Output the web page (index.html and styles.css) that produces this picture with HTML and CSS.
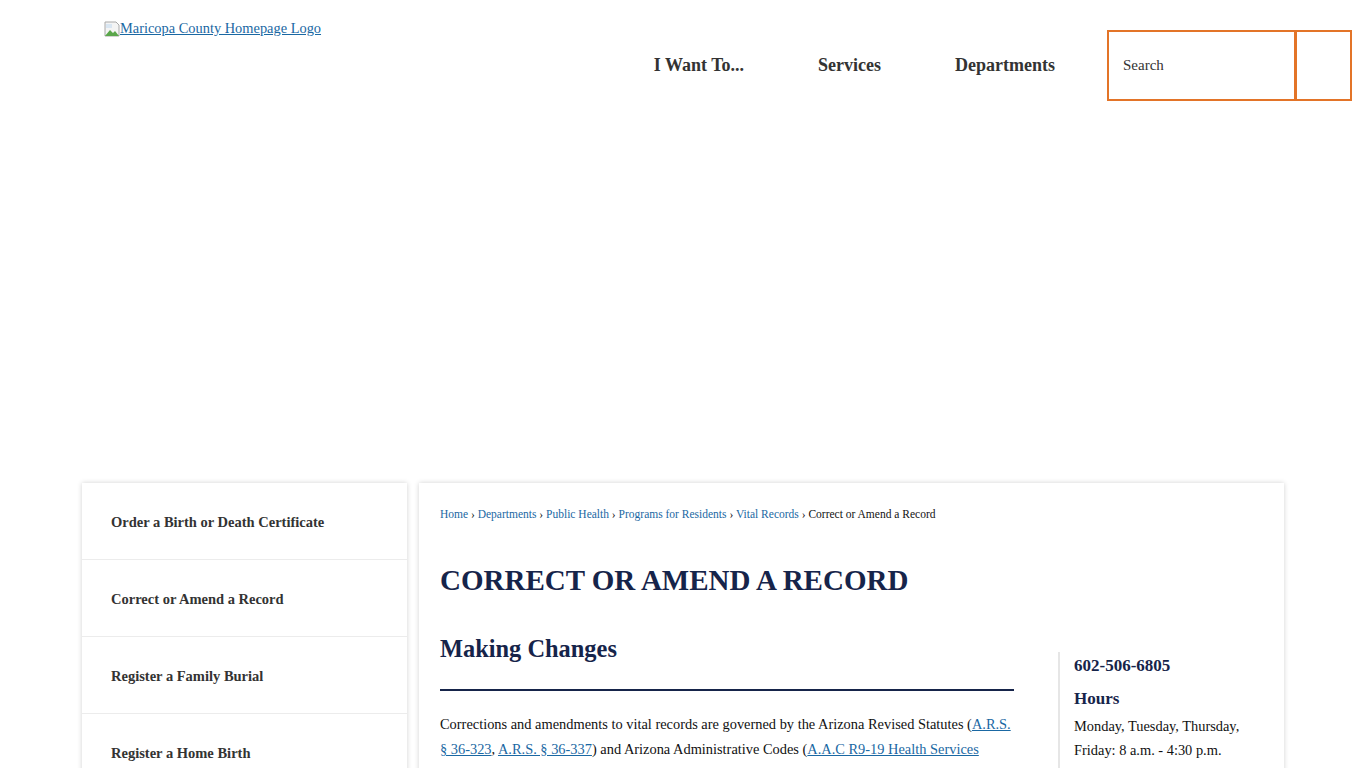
FILE: index.html
```html
<!DOCTYPE html>
<html lang="en">
<head>
  <meta charset="UTF-8">
  <meta name="viewport" content="width=device-width, initial-scale=1.0">
  <title>Correct or Amend a Record | Maricopa County, AZ</title>
  <link rel="stylesheet" href="styles.css">
</head>
<body>
  <header class="site-header">
    <a class="logo" href="#">
      <svg class="broken-img" width="16" height="16" viewBox="0 0 16 16" aria-hidden="true">
        <path d="M1 1h11l3 3v11H1z" fill="#f4f4f4" stroke="#a8a8a8"/>
        <path d="M1 15l5-6 3 3 2-2 4 5z" fill="#5aa64a"/>
        <path d="M2 3h6v4H2z" fill="#d9e6f2"/>
      </svg><span>Maricopa County Homepage Logo</span>
    </a>
    <nav class="main-nav">
      <a href="#">I Want To...</a>
      <a href="#">Services</a>
      <a href="#">Departments</a>
    </nav>
    <form class="search">
      <input type="text" placeholder="Search">
      <button type="button" aria-label="Search"></button>
    </form>
  </header>

  <div class="banner"></div>

  <div class="page">
    <aside class="side-nav">
      <a href="#">Order a Birth or Death Certificate</a>
      <a href="#">Correct or Amend a Record</a>
      <a href="#">Register a Family Burial</a>
      <a href="#">Register a Home Birth</a>
    </aside>

    <main class="content">
      <div class="breadcrumb">
        <a href="#">Home</a> › <a href="#">Departments</a> › <a href="#">Public Health</a> › <a href="#">Programs for Residents</a> › <a href="#">Vital Records</a> › Correct or Amend a Record
      </div>
      <h1>CORRECT OR AMEND A RECORD</h1>

      <div class="columns">
        <section class="article">
          <h2>Making Changes</h2>
          <p>Corrections and amendments to vital records are governed by the Arizona Revised Statutes (<a href="#">A.R.S. § 36-323</a>, <a href="#">A.R.S. § 36-337</a>) and Arizona Administrative Codes (<a href="#">A.A.C R9-19 Health Services Chapter 1</a>). The Maricopa County Office of Vital Registration can only process changes to records for births and deaths that occurred in the county.</p>
        </section>
        <aside class="contact">
          <h3>602-506-6805</h3>
          <h3 class="hours">Hours</h3>
          <p>Monday, Tuesday, Thursday, Friday: 8 a.m. - 4:30 p.m.</p>
        </aside>
      </div>
    </main>
  </div>
</body>
</html>
```

FILE: styles.css
```css
body {
  margin: 0;
  font-family: "Liberation Serif", "Times New Roman", serif;
  color: #333;
  background: #fff;
}
a {
  color: #1a68a3;
}
.site-header {
  display: flex;
  align-items: flex-start;
  padding: 18px 14px 0 104px;
  height: 84px;
}
.logo {
  display: flex;
  align-items: center;
  font-size: 14.4px;
  margin-top: 2px;
}
.broken-img {
  flex: none;
}
.main-nav {
  display: flex;
  margin-left: auto;
  margin-top: 37px;
  gap: 74px;
  margin-right: 52px;
}
.main-nav a {
  color: #333;
  text-decoration: none;
  font-weight: bold;
  font-size: 18px;
  line-height: 20px;
}
.search {
  display: flex;
  margin-top: 12px;
}
.search input {
  box-sizing: border-box;
  width: 189px;
  height: 71px;
  padding: 0 14px;
  border: 2px solid #e37428;
  font-family: inherit;
  font-size: 15px;
  color: #333;
  outline: none;
  margin: 0;
}
.search input::placeholder {
  color: #333;
}
.search button {
  box-sizing: border-box;
  width: 57px;
  height: 71px;
  border: 2px solid #e37428;
  background: #fff;
  margin: 0 0 0 -1px;
  padding: 0;
}
.banner {
  height: 381px;
}
.page {
  width: 1202px;
  margin: 0 auto;
  display: flex;
  gap: 12px;
  align-items: flex-start;
}
.side-nav {
  width: 325px;
  flex: none;
  background: #fff;
  box-shadow: 0 0 5px rgba(0, 0, 0, 0.18);
  display: flex;
  flex-direction: column;
}
.side-nav a {
  display: block;
  padding: 31px 29px 28px;
  font-size: 14.5px;
  line-height: 17px;
  font-weight: bold;
  color: #333;
  text-decoration: none;
  border-bottom: 1px solid #ececec;
}
.content {
  flex: 1;
  background: #fff;
  box-shadow: 0 0 5px rgba(0, 0, 0, 0.18);
  padding: 23px 21px 30px;
  min-height: 400px;
}
.breadcrumb {
  font-size: 11.5px;
  line-height: 16px;
  color: #111;
}
.breadcrumb a {
  text-decoration: none;
}
.content h1 {
  margin: 41px 0 0;
  font-size: 29px;
  line-height: 34px;
  color: #16244a;
}
.columns {
  display: flex;
  gap: 44px;
  margin-top: 38px;
}
.article {
  width: 574px;
  flex: none;
}
.article h2 {
  margin: 0;
  font-size: 24.4px;
  line-height: 28px;
  color: #16244a;
  padding-bottom: 26px;
  border-bottom: 2px solid #16244a;
}
.article p {
  margin: 21px 0 0;
  font-size: 14.4px;
  line-height: 25px;
  color: #111;
}
.contact {
  flex: 1;
  margin-top: 17px;
  border-left: 2px solid #e6e6e6;
  padding-left: 14px;
}
.contact h3 {
  margin: 3px 0 11px;
  font-size: 17px;
  line-height: 22px;
  color: #16244a;
}
.contact h3.hours {
  margin-bottom: 4px;
}
.contact p {
  margin: 0;
  font-size: 14.4px;
  line-height: 24px;
  color: #111;
  width: 180px;
}
```
